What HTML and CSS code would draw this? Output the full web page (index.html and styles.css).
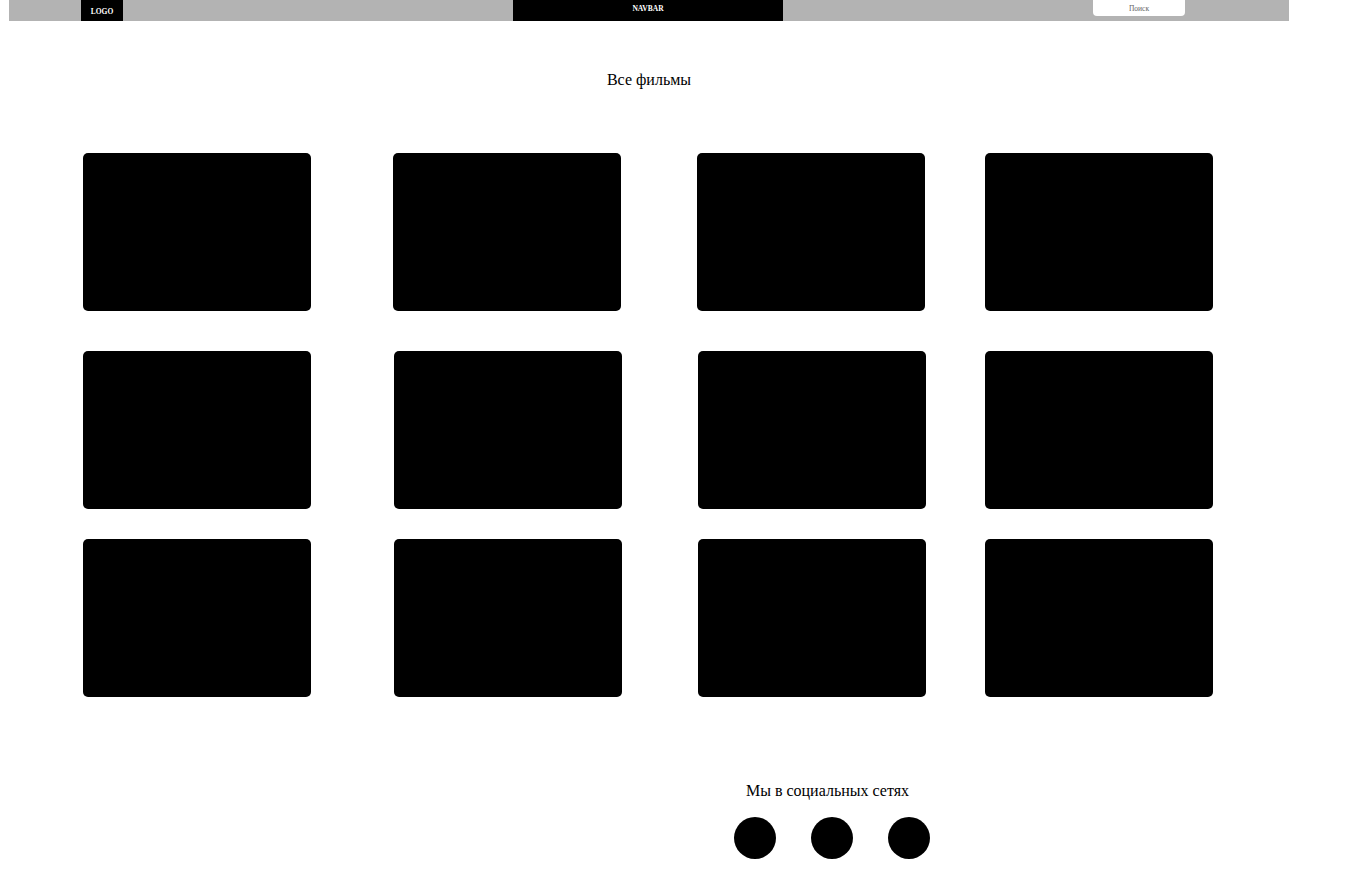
FILE: index.html
```html
<!DOCTYPE html>
<html lang="ru">
<head>
    <meta charset="UTF-8">
    <meta name="viewport" content="width=device-width, initial-scale=1.0">
    <title>Все фильмы</title>
    <link rel="stylesheet" href="styles.css">
</head>
<body>
    <div class="page">
        <header class="navbar">
            <div class="logo">LOGO</div>
            <nav class="nav">NAVBAR</nav>
            <div class="search">Поиск</div>
        </header>

        <main>
            <h1 class="title">Все фильмы</h1>

            <!-- Movie cards -->
            <section class="movies">
                <div class="row row-top">
                    <div class="card"></div>
                    <div class="card"></div>
                    <div class="card"></div>
                    <div class="card"></div>
                </div>
                <div class="row row-middle">
                    <div class="card"></div>
                    <div class="card"></div>
                    <div class="card"></div>
                    <div class="card"></div>
                </div>
                <div class="row row-bottom">
                    <div class="card"></div>
                    <div class="card"></div>
                    <div class="card"></div>
                    <div class="card"></div>
                </div>
            </section>
        </main>

        <footer class="footer">
            <p class="footer-title">Мы в социальных сетях</p>
            <div class="socials">
                <a class="social" href="#"></a>
                <a class="social" href="#"></a>
                <a class="social" href="#"></a>
            </div>
        </footer>
    </div>
</body>
</html>
```

FILE: styles.css
```css
body {
    margin: 0;
    padding: 0;
    background-color: #fff;
    color: #000;
    font-family: "Liberation Serif", "Times New Roman", serif;
}

.page {
    width: 1280px;
    margin-left: 9px;
}

/* Navbar */
.navbar {
    display: flex;
    align-items: flex-start;
    height: 21px;
    background-color: #b3b3b3;
}

.logo {
    margin-left: 72px;
    width: 42px;
    height: 21px;
    padding-top: 1px;
    box-sizing: border-box;
    display: flex;
    align-items: center;
    justify-content: center;
    background-color: #000;
    color: #fff;
    font-size: 7.5px;
    font-weight: bold;
}

.nav {
    margin-left: 390px;
    width: 270px;
    height: 21px;
    padding-top: 4px;
    box-sizing: border-box;
    text-align: center;
    background-color: #000;
    color: #fff;
    font-size: 7.5px;
    font-weight: bold;
    line-height: 10px;
}

.search {
    margin-left: 310px;
    width: 92px;
    height: 16px;
    padding-top: 1px;
    box-sizing: border-box;
    line-height: 15px;
    text-align: center;
    background-color: #fff;
    border-radius: 0 0 4px 4px;
    color: #666;
    font-size: 7.5px;
}

/* Title */
.title {
    margin: 50px 0 0;
    font-size: 16px;
    font-weight: normal;
    line-height: 18px;
    text-align: center;
}

/* Cards */
.movies {
    margin-top: 64px;
    margin-left: 74px;
}

.row {
    display: grid;
    grid-template-columns: 311px 304px 287px 228px;
}

.row-top {
    grid-template-columns: 310px 304px 288px 228px;
}

.row-middle {
    margin-top: 40px;
}

.row-bottom {
    margin-top: 30px;
}

.card {
    width: 228px;
    height: 158px;
    background-color: #000;
    border-radius: 5px;
}

/* Footer */
.footer {
    margin-top: 85px;
    margin-left: 725px;
    width: 196px;
    display: flex;
    flex-direction: column;
    align-items: center;
}

.footer-title {
    margin: 0;
    padding-right: 9px;
    font-size: 16px;
    line-height: 18px;
}

.socials {
    display: flex;
    gap: 35px;
    margin-top: 17px;
}

.social {
    display: block;
    width: 42px;
    height: 42px;
    border-radius: 50%;
    background-color: #000;
}
```
